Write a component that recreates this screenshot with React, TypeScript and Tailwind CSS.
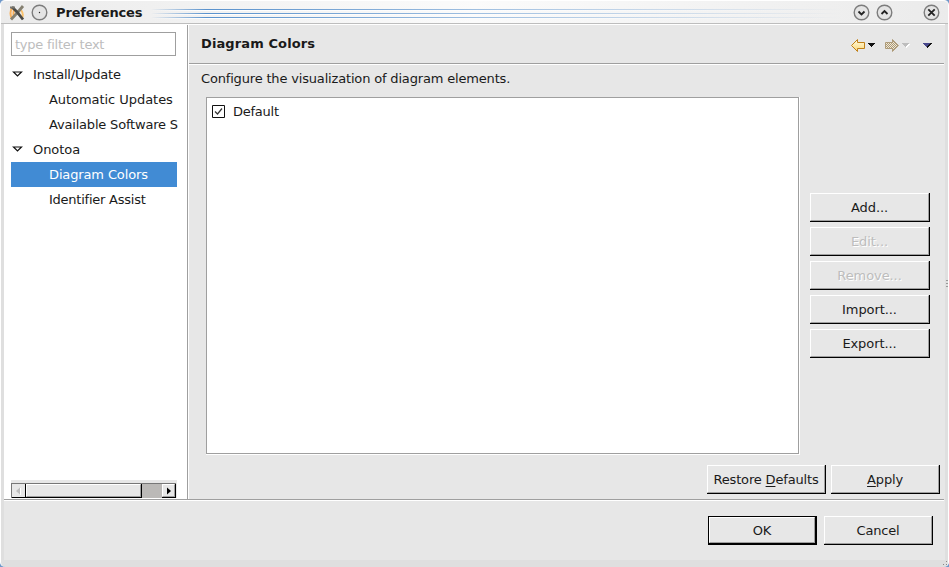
import React from 'react';

function Btn({ children, className = '', disabled = false, primary = false }: { children: React.ReactNode; className?: string; disabled?: boolean; primary?: boolean }) {
  return (
    <button
      className={`block shrink-0 whitespace-nowrap bg-[#e7e7e7] ${primary ? 'border border-r-2 border-b-2 border-black' : 'border-r border-b border-black'} ${disabled ? 'text-[#bdbdbd] [text-shadow:1px_1px_0_#fff]' : ''} ${className}`}
    >
      <span className="flex h-full w-full items-center justify-center border border-t-white border-l-white border-r-[#9f9f9f] border-b-[#9f9f9f]">
        {children}
      </span>
    </button>
  );
}

function Expander() {
  return (
    <svg width="11" height="7" viewBox="0 0 11 7" className="mr-[10px] shrink-0">
      <path d="M1.500 1h8L5.500 5z" fill="#fff" stroke="#111" strokeWidth="1.200" />
    </svg>
  );
}

function Round({ children }: { children: React.ReactNode }) {
  return (
    <svg width="17" height="17" viewBox="0 0 17 17" className="shrink-0">
      <circle cx="8.500" cy="8.500" r="7.300" fill="#e4e4e4" stroke="#7c7c7c" strokeWidth="1.400" />
      {children}
    </svg>
  );
}

function Streak() {
  return (
    <div className="h-[2px]">
      <div className="h-px bg-linear-to-r from-transparent via-[#5a92cd] via-8% to-transparent" />
      <div className="h-px bg-linear-to-r from-transparent via-white via-8% to-transparent" />
    </div>
  );
}

function TitleBar() {
  return (
    <div className="flex h-[24px] shrink-0 items-center rounded-t-[5px] border-t border-b border-t-white border-b-[#bdbdbd] bg-linear-to-r from-[#ebebeb] via-[#fbfbfb] to-[#ebebeb] px-[8px] pt-px">
      <svg width="16" height="16" viewBox="0 0 16 16" className="shrink-0">
        <path d="M3 3Q0 8 3 14M5 5Q4 8 5 12" stroke="#ff9c28" strokeWidth="2" fill="none" opacity=".75" />
        <path d="M12 5Q15 9 13 13" stroke="#ffb84c" strokeWidth="2" fill="none" opacity=".8" />
        <path d="M14 1L9 7L2 14.500" stroke="#858071" strokeWidth="2.800" fill="none" />
        <path d="M3 2L8 7L14 14.500" stroke="#4b4a46" strokeWidth="2.800" fill="none" />
        <path d="M1 2.500h5" stroke="#77746d" strokeWidth="2" />
      </svg>
      <div className="ml-[6px] flex">
        <Round><circle cx="8.500" cy="8.500" r=".7" fill="#222" /></Round>
      </div>
      <span className="ml-[8px] w-[90px] text-[13px] font-bold tracking-[-0.15px]">Preferences</span>
      <div className="ml-[5px] flex w-[690px] flex-col gap-[2px] pt-[3px]">
        <Streak />
        <Streak />
        <Streak />
      </div>
      <div className="ml-auto flex gap-[6px]">
        <Round><path d="M5.500 7.500l3 3 3-3" fill="none" stroke="#222" strokeWidth="1.800" /></Round>
        <Round><path d="M5.500 10l3-3 3 3" fill="none" stroke="#222" strokeWidth="1.800" /></Round>
      </div>
      <div className="ml-[30px] flex">
        <Round><path d="M5.300 5.300l6.400 6.400M11.700 5.300l-6.400 6.400" stroke="#222" strokeWidth="1.800" /></Round>
      </div>
    </div>
  );
}

function TreeRow({ label, tracking = '', child = false, selected = false }: { label: string; tracking?: string; child?: boolean; selected?: boolean }) {
  return (
    <div className={`flex h-[25px] items-center whitespace-nowrap ${child ? 'pl-[38px]' : 'pl-[1px]'} ${selected ? 'bg-[#418bd4] text-white' : ''}`}>
      {!child && <Expander />}
      <span className={tracking}>{label}</span>
    </div>
  );
}

function Sidebar() {
  return (
    <div className="flex w-[183px] shrink-0 flex-col bg-white pt-[7px] pl-[7px]">
      <div className="flex h-[24px] w-[165px] items-center border border-[#9f9f9f] pl-[3px] tracking-[-0.25px] text-[#bdbdbd]">type filter text</div>
      <div className="mt-[6px] w-[166px]">
        <TreeRow label="Install/Update" tracking="tracking-[-0.2px]" />
        <TreeRow label="Automatic Updates" tracking="tracking-[-0.05px]" child />
        <TreeRow label="Available Software S" tracking="tracking-[-0.19px]" child />
        <TreeRow label="Onotoa" tracking="tracking-[-0.05px]" />
        <TreeRow label="Diagram Colors" tracking="tracking-[-0.13px]" child selected />
        <TreeRow label="Identifier Assist" tracking="tracking-[-0.24px]" child />
      </div>
      <div className="mt-auto mb-[1px] w-[166px] bg-[#e7e7e7] pt-[3px]">
        <div className="flex h-[15px] w-[165px] border-t border-l border-[#777] bg-[#bbb9b7]">
          <div className="flex w-[14px] items-center justify-center border-r border-b border-black bg-[#e7e7e7]">
            <svg width="5" height="8" viewBox="0 0 5 8"><path d="M4 .5v7L0 4z" fill="#bdbdbd" /><path d="M4.500 1v7" stroke="#fff" /></svg>
          </div>
          <div className="w-[116px] border-r border-b border-black bg-[#e7e7e7]">
            <div className="h-full border border-t-white border-l-white border-r-[#9f9f9f] border-b-[#9f9f9f]" />
          </div>
          <div className="ml-auto w-[14px] border-r border-b border-black bg-[#e7e7e7]">
            <div className="flex h-full items-center justify-center border border-t-white border-l-white border-r-[#9f9f9f] border-b-[#9f9f9f]">
              <svg width="5" height="8" viewBox="0 0 5 8"><path d="M1 .5v7L5 4z" fill="#000" /></svg>
            </div>
          </div>
        </div>
      </div>
    </div>
  );
}

function NavIcons() {
  return (
    <svg width="82" height="13" viewBox="0 0 82 13" shapeRendering="crispEdges">
      <defs>
        <pattern id="dither" width="2" height="2" patternUnits="userSpaceOnUse">
          <path d="M0 0h2v2H0z" fill="#f3ead2" />
          <path d="M0 0h1v1H0zM1 1h1v1H1z" fill="#a8977a" />
        </pattern>
        <linearGradient id="gold" x1="0" y1="0" x2="0" y2="1">
          <stop offset="0" stopColor="#fffbe0" />
          <stop offset="1" stopColor="#fbd777" />
        </linearGradient>
      </defs>
      <path d="M.5 6.500L6.500.5v3h7v6h-7v3z" fill="url(#gold)" stroke="#c08018" shapeRendering="auto" />
      <path d="M17 4h7v1h-1v1h-1v1h-1v1h-1V7h-1V6h-1V5h-1z" fill="#111" />
      <path d="M47.500 6.500L41.500.5v3h-7v6h7v3z" fill="url(#dither)" stroke="#a08a62" strokeOpacity=".75" shapeRendering="auto" />
      <path d="M52 5h7v1h-1v1h-1v1h-1v1h-1V8h-1V7h-1V6h-1z" fill="#fff" />
      <path d="M51 4h7v1h-1v1h-1v1h-1v1h-1V7h-1V6h-1V5h-1z" fill="#bdbdbd" />
      <path d="M71 4h10l-5 5z" fill="#111" />
      <path d="M72 4h7l-4 4z" fill="#48488c" />
    </svg>
  );
}

function Content() {
  return (
    <div className="flex min-w-0 flex-1 flex-col">
      <div className="flex h-[38px] shrink-0 items-center pr-[12px] pl-[12px]">
        <span className="-mt-[2px] font-bold tracking-[0.11px]">Diagram Colors</span>
        <div className="ml-auto mt-[2px]"><NavIcons /></div>
      </div>
      <div className="mr-px h-[2px] shrink-0 border-t border-t-[#9f9f9f] bg-white" />
      <div className="mt-[3px] h-[21px] pl-[12px] leading-[21px] tracking-[-0.17px]">Configure the visualization of diagram elements.</div>
      <div className="mt-[8px] flex h-[358px] pl-[17px]">
        <div className="w-[594px] shrink-0 border-r border-b border-white">
          <div className="h-full border border-[#9f9f9f] bg-white pt-[7px] pl-[5px]">
            <div className="flex h-[13px] items-center">
              <svg width="13" height="13" viewBox="0 0 13 13">
                <path d="M.5.5h12v12H.5z" fill="#fff" stroke="#111" />
                <path d="M3 6.500l2.500 2.500 4.500-5.500" fill="none" stroke="#333" strokeWidth="1.200" />
              </svg>
              <span className="ml-[8px] tracking-[-0.25px]">Default</span>
            </div>
          </div>
        </div>
        <div className="mt-[96px] ml-[10px] flex flex-col gap-[5px] tracking-[-0.08px]">
          <Btn className="h-[29px] w-[120px]">Add...</Btn>
          <Btn className="h-[29px] w-[120px]" disabled>Edit...</Btn>
          <Btn className="h-[29px] w-[120px]" disabled>Remove...</Btn>
          <Btn className="h-[29px] w-[120px]">Import...</Btn>
          <Btn className="h-[29px] w-[120px]">Export...</Btn>
        </div>
      </div>
      <div className="mt-[10px] flex justify-end gap-[5px] pr-[5px] tracking-[-0.17px]">
        <Btn className="h-[29px] w-[119px]"><span>Restore <u className="underline-offset-2">D</u>efaults</span></Btn>
        <Btn className="h-[29px] w-[109px]"><span><u className="underline-offset-2">A</u>pply</span></Btn>
      </div>
    </div>
  );
}

export default function App() {
  return (
    <div className="relative h-[567px] w-[949px] overflow-hidden bg-[#6f98c9] font-['DejaVu_Sans','Liberation_Sans',sans-serif] text-[13px] leading-[17px] text-[#1a1a1a]">
      <div className="flex h-full flex-col rounded-[5px] border-x border-white bg-[#dfdfdf]">
        <TitleBar />
        <div className="mr-[3px] ml-[3px] flex h-[475px] shrink-0 border-t border-white bg-[#e7e7e7]">
          <Sidebar />
          <div className="w-[2px] shrink-0 border-l border-[#9f9f9f] bg-white" />
          <Content />
        </div>
        <div className="mr-[3px] ml-[3px] h-[61px] bg-[#e7e7e7]">
          <div className="mr-px h-[2px] border-t border-[#9f9f9f] bg-white" />
          <div className="mt-[15px] flex justify-end gap-[7px] pr-[12px] tracking-[-0.17px]">
            <Btn primary className="h-[29px] w-[109px]">OK</Btn>
            <Btn className="h-[29px] w-[109px]">Cancel</Btn>
          </div>
        </div>
      </div>
      <svg width="3" height="8" viewBox="0 0 3 8" className="absolute top-[280px] right-0">
        <path d="M0 0h2v1H0zM0 3h2v1H0zM0 6h2v1H0z" fill="#999" />
      </svg>
      <svg width="7" height="7" viewBox="0 0 7 7" className="absolute right-0 bottom-0">
        <path d="M4 1h1v1H4zM1 4h1v1H1zM4 4h1v1H4z" fill="#888" />
      </svg>
    </div>
  );
}
